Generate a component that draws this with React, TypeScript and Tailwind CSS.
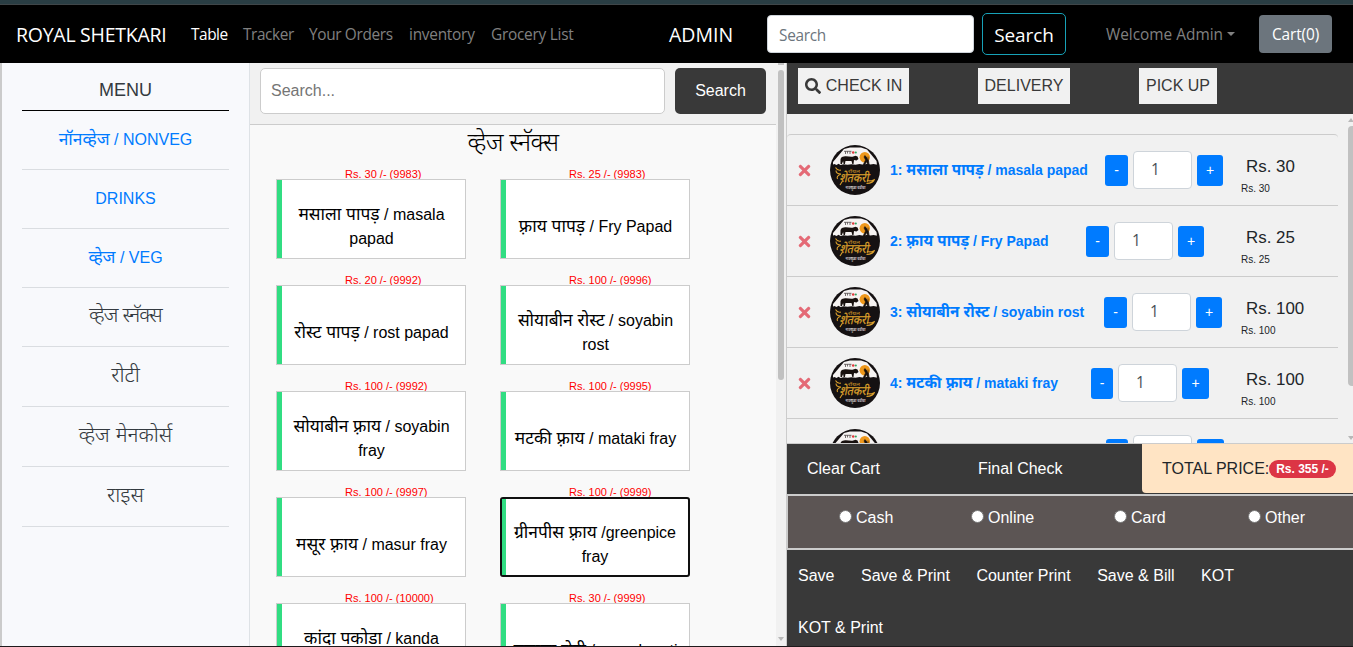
import React from "react";
import { FaSearch, FaTimes } from "react-icons/fa";

const menu = [
  { text: "नॉनव्हेज / NONVEG", link: true, h: "h-[59px]" },
  { text: "DRINKS", link: true, h: "h-[59px]" },
  { text: "व्हेज / VEG", link: true, h: "h-[59px]" },
  { text: "व्हेज स्नॅक्स", link: false, h: "h-[59px] tracking-[-0.9px]" },
  { text: "रोटी", link: false, h: "h-[60px]" },
  { text: "व्हेज मेनकोर्स", link: false, h: "h-[60px]" },
  { text: "राइस", link: false, h: "h-[60px]" },
];

const dishes = [
  { price: "Rs. 30 /- (9983)", lines: ["मसाला पापड़ / masala", "papad"] },
  { price: "Rs. 25 /- (9983)", lines: ["फ़्राय पापड़ / Fry Papad"] },
  { price: "Rs. 20 /- (9992)", lines: ["रोस्ट पापड़ / rost papad"] },
  { price: "Rs. 100 /- (9996)", lines: ["सोयाबीन रोस्ट / soyabin", "rost"] },
  { price: "Rs. 100 /- (9992)", lines: ["सोयाबीन फ़्राय / soyabin", "fray"] },
  { price: "Rs. 100 /- (9995)", lines: ["मटकी फ़्राय / mataki fray"] },
  { price: "Rs. 100 /- (9997)", lines: ["मसूर फ़्राय / masur fray"] },
  { price: "Rs. 100 /- (9999)", lines: ["ग्रीनपीस फ़्राय /greenpice", "fray"], focus: true },
  { price: "Rs. 100 /- (10000)", lines: ["कांदा पकोडा / kanda", "pakoda"] },
  { price: "Rs. 30 /- (9999)", lines: ["मसाला रोटी / masala roti"] },
];

const cart = [
  { name: "1: मसाला पापड़ / masala papad", price: "Rs. 30", w: "w-[215px]", m: "w-[23px]", p: "w-[26px]" },
  { name: "2: फ़्राय पापड़ / Fry Papad", price: "Rs. 25", w: "w-[196px]", m: "w-[23px]", p: "w-[26px]" },
  { name: "3: सोयाबीन रोस्ट / soyabin rost", price: "Rs. 100", w: "w-[214px]", m: "w-[23px]", p: "w-[26px]" },
  { name: "4: मटकी फ़्राय / mataki fray", price: "Rs. 100", w: "w-[201px]", m: "w-[22px]", p: "w-[27px]" },
  { name: "5: मसूर फ़्राय / masur fray", price: "Rs. 100", w: "w-[216px]", m: "w-[22px]", p: "w-[27px]" },
];

/* Sets Devanagari runs slightly larger than the Latin text beside them. */
function Mixed({ text }: { text: string }) {
  return (
    <>
      {text.split(/([\u0900-\u097F]+(?:\s[\u0900-\u097F]+)*)/).map((run, i) =>
        i % 2 ? (
          <span key={i} className="text-[1.085em] leading-none">{run}</span>
        ) : (
          run
        ),
      )}
    </>
  );
}

function Logo() {
  return (
    <svg viewBox="0 0 50 50" className="ml-[19px] size-[50px] shrink-0">
      <circle cx="25" cy="25" r="25" fill="#151112" />
      <path d="M3 20.500V17L14 4L20 2.500H31L37 4.500L46.500 16L47 20.500Z" fill="#f6f3f2" />
      <path d="M14 6.300h7.500M15.500 6v3M17.500 6v2.500M20 6v3" stroke="#66605f" strokeWidth=".9" />
      <circle cx="23.200" cy="7.500" r="1.300" fill="#e0393c" />
      <circle cx="25.800" cy="7.500" r="1.100" fill="#2da861" />
      <circle cx="34.800" cy="12.300" r="5.200" fill="#ef981b" />
      <path d="M10.500 19v-4.500c.3-2 1.500-2.800 3.500-3 3-.6 6 .5 8.500.2l3-1 2 .8 1 2.500-2 1.500-2.500-.5-.5 4h-1.200l-.8-3h-6l-.6 3h-1.300l-.5-3-1.200 3z" fill="#17100e" />
      <path d="M33 20l2.500-5-1.500-3 .8-1.500 1.700 1.500 2 4 .5 4h-1.200l-1.300-3.500-1.500 3.500zM38 11.500l1 8" fill="#17100e" stroke="#17100e" strokeWidth=".5" />
      <path d="M2.500 19.800l2-.8 2 1 2-1.200 2 1.200 3-.8 4 .5 4-.5 4 .5 4-.8 4 .8 4-1 3 .8 3-.6 4 .8V23h-45z" fill="#151112" />
      <text x="18" y="27.500" fontSize="5" fill="#dba02c" fontFamily="Noto Sans Devanagari, Noto Sans, sans-serif" textLength="12" lengthAdjust="spacingAndGlyphs">रॉयल</text>
      <text x="9.500" y="37" fontSize="12.500" fontStyle="italic" fill="#dba02c" stroke="#dba02c" strokeWidth=".25" fontFamily="Noto Sans Devanagari, Noto Sans, sans-serif" textLength="29" lengthAdjust="spacingAndGlyphs">शेतकरी</text>
      <path d="M5.500 22.500q2 3.500 5.500 2.500M6 25.500q0 3.500 5 3.500-5 2-3.500 5M12.500 36l-2.500 4M36.500 38.500q7-.5 8-4.500M37 35.500q3.500 1 6.500-.5" stroke="#dba02c" strokeWidth="1.100" fill="none" />
      <text x="15.500" y="44" fontSize="4.200" fontWeight="bold" fill="#c9c5c3" fontFamily="Noto Sans Devanagari, Noto Sans, sans-serif" textLength="20" lengthAdjust="spacingAndGlyphs">नादखुळा चवीचा</text>
    </svg>
  );
}

function Navbar() {
  return (
    <nav className="flex h-[58px] shrink-0 items-center bg-black font-['Open_Sans','Noto_Sans',sans-serif] text-[15.4px] whitespace-nowrap text-[#808080]">
      <span className="ml-4 w-[175px] pt-px text-[19.500px] tracking-[-0.26px] text-white">ROYAL SHETKARI</span>
      <span className="w-[52px] pt-[2px] tracking-[-0.45px] text-white">Table</span>
      <span className="w-[66px] pt-[2px] tracking-[-0.4px]">Tracker</span>
      <span className="w-[100px] pt-[2px] tracking-[-0.35px]">Your Orders</span>
      <span className="w-[82px] pt-[2px] tracking-[-0.25px]">inventory</span>
      <span className="w-[178px] pt-[2px] tracking-[-0.25px]">Grocery List</span>
      <span className="w-[98px] pt-px text-[19.500px] text-white">ADMIN</span>
      <input className="h-[38px] w-[207px] rounded border border-[#ced4da] bg-white px-[11px] pt-[2px] text-[15.4px] tracking-[-0.3px] placeholder:text-[#6c757d]" placeholder="Search" />
      <button className="ml-2 h-[42px] w-[84px] rounded-[5px] border border-[#17a2b8] pt-[2px] text-[19px] tracking-[-0.1px] text-white">Search</button>
      <span className="ml-10 w-[121px] pt-[2px]">Welcome Admin</span>
      <span className="h-0 w-0 border-x-[4px] border-t-[4px] border-x-transparent border-t-[#808080]" />
      <button className="ml-auto mr-[21px] h-[38px] w-[73px] rounded bg-[#6c757d] pt-[2px] text-[15.4px] tracking-[-0.1px] text-white">Cart(0)</button>
    </nav>
  );
}

function Sidebar() {
  return (
    <aside className="w-[250px] shrink-0 border-r border-l-2 border-r-[#dee2e6] border-l-[#cbcbcb] bg-[#f8f9fc] pr-5 pl-5 text-center text-[#343a40]">
      <div className="flex h-12 items-center justify-center border-b border-black pt-2 text-[18px]">MENU</div>
      {menu.map((m) => (
        <div key={m.text} className={`border-b border-[#dadde1] ${m.h} ${m.link ? "pt-[17px] text-[16px] leading-6 text-[#007bff]" : "flex items-center justify-center pb-1 text-[21px] font-light"}`}>
          {m.link ? <Mixed text={m.text} /> : m.text}
        </div>
      ))}
    </aside>
  );
}

function Dishes() {
  return (
    <main className="flex w-[536px] shrink-0 bg-[#f9f9f9]">
      <div className="flex w-[526px] flex-col">
        <div className="flex h-[62px] shrink-0 gap-[10px] border-b border-[#ccc] bg-[#f1f1f1] px-[10px] pt-[5px]">
          <input className="h-[46px] w-[405px] rounded-[5px] border border-[#ccc] bg-white px-[10px] text-[16px] placeholder:text-[#757575]" placeholder="Search..." />
          <button className="h-[46px] w-[91px] rounded-[5px] bg-[#393939] text-[16px] text-white">Search</button>
        </div>
        <h2 className="h-[41px] shrink-0 text-center text-[25px] leading-[34px] font-light tracking-[-0.5px] text-black">व्हेज स्नॅक्स</h2>
        <div className="grid grid-cols-[190px_190px] content-start gap-x-[34px] overflow-hidden pl-[26px]">
          {dishes.map((d, i) => (
            <div key={i} className="h-[106px]">
              <div className="h-[13px] overflow-hidden pl-[69px] text-[11px] leading-[16px] whitespace-nowrap text-[#ff0000]">{d.price}</div>
              <button className={`flex h-[80px] w-[190px] bg-white text-[16px] leading-6 text-black ${d.focus ? "rounded-[3px] border-2 border-[#101010]" : "border border-[#ccc]"}`}>
                <span className={`h-full shrink-0 bg-[#31dd82] ${d.focus ? "w-[4px]" : "w-[5px]"}`} />
                <span className={`flex-1 pr-[4px] whitespace-nowrap ${d.lines.length > 1 ? (d.focus ? "pt-[22px]" : "pt-[23px]") : "pt-[35px]"}`}>
                  {d.lines.map((l) => (
                    <span key={l} className="block h-6"><Mixed text={l} /></span>
                  ))}
                </span>
              </button>
            </div>
          ))}
        </div>
      </div>
      <div className="flex flex-1 flex-col items-center justify-between bg-[#f1f1f1] pr-px">
        <span className="h-[2px] w-[6px] bg-[#c1c1c1]" />
        <span className="mt-[5px] mb-auto h-[310px] w-[6px] rounded-full bg-[#c1c1c1]" />
        <span className="mb-[5px] h-0 w-0 border-x-[3px] border-t-[4px] border-x-transparent border-t-[#b8b8b8]" />
      </div>
    </main>
  );
}

function CartPanel() {
  return (
    <section className="flex flex-1 flex-col overflow-hidden border-l border-[#ccc] bg-[#f1f1f1] whitespace-nowrap">
      <div className="flex h-[51px] shrink-0 bg-[#393939] pt-[5px] pl-[11px] text-[16px] text-[#393939]">
        <button className="flex h-9 w-[111px] items-center justify-center gap-[5px] bg-[#f1f1f1]"><FaSearch className="size-4" />CHECK IN</button>
        <button className="ml-[69px] h-9 w-[92px] bg-[#f1f1f1]">DELIVERY</button>
        <button className="ml-[69px] h-9 w-[78px] bg-[#f1f1f1]">PICK UP</button>
      </div>
      <div className="flex h-[330px] shrink-0 overflow-hidden border-b border-[#ccc]">
        <div className="mt-5 h-[400px] w-[551px] rounded-t-[4px] border-t border-[#ccc]">
          {cart.map((c) => (
            <div key={c.name} className="flex h-[71px] items-center border-b border-[#ccc] pl-[11px]">
              <FaTimes className="h-[17px] w-[13px] text-[#e46a76]" />
              <Logo />
              <div className="ml-[10px] flex w-[351px] items-center">
                <span className={`${c.w} shrink-0 text-[14px] leading-5 font-bold text-[#007bff]`}><Mixed text={c.name} /></span>
                <button className={`h-[31px] ${c.m} rounded-[3px] bg-[#007bff] text-[14px] text-white`}>-</button>
                <span className="mx-[5px] flex h-[38px] w-[59px] items-center rounded border border-[#ced4da] bg-white pl-[17px] font-['Open_Sans','Noto_Sans',sans-serif] text-[15.4px] text-[#495057]">1</span>
                <button className={`h-[31px] ${c.p} rounded-[3px] bg-[#007bff] text-[14px] text-white`}>+</button>
              </div>
              <div className="pt-[12px] text-[#212529]">
                <div className="pl-[5px] text-[16.900px] leading-6">{c.price}</div>
                <div className="text-[10px] leading-[19px]">{c.price}</div>
              </div>
            </div>
          ))}
        </div>
        <div className="ml-auto flex w-[5px] flex-col">
          <span className="mt-[4px] h-0 w-0 border-x-[3px] border-b-[4px] border-x-transparent border-b-[#b8b8b8]" />
          <span className="mt-[4px] h-[260px] w-[8px] rounded-full bg-[#c1c1c1]" />
          <span className="mt-auto mb-[3px] h-0 w-0 border-x-[3px] border-t-[4px] border-x-transparent border-t-[#b8b8b8]" />
        </div>
      </div>
      <div className="flex h-[50px] shrink-0 items-center bg-[#393939] text-[16px] text-white">
        <span className="ml-5 w-[171px]">Clear Cart</span>
        <span className="w-[164px]">Final Check</span>
        <div className="flex h-[49px] flex-1 items-center self-start rounded-bl-[4px] bg-[#ffe4c4] pl-5 text-[#212529]">
          <span className="w-[107px] shrink-0">TOTAL PRICE:</span>
          <span className="h-[18px] w-[67px] shrink-0 rounded-full bg-[#dc3545] text-center text-[12px] leading-[18px] font-bold text-white">Rs. 355 /-</span>
        </div>
      </div>
      <div className="flex h-14 shrink-0 border-y-2 border-l border-[#ccc] bg-[#5c5554] pt-[10px] text-[16px] leading-6 text-white">
        {[
          { t: "Cash", c: "ml-[51px] w-[132px]" },
          { t: "Online", c: "w-[143px]" },
          { t: "Card", c: "w-[134px]" },
          { t: "Other", c: "" },
        ].map((o) => (
          <label key={o.t} className={`flex ${o.c}`}>
            <span className="mt-[4px] mr-[4px] size-[13px] rounded-full border border-[#767676] bg-white" />
            {o.t}
          </label>
        ))}
      </div>
      <div className="flex flex-1 flex-wrap content-start gap-x-[26.500px] gap-y-7 bg-[#393939] pt-[14px] pr-20 pl-[11px] text-[16px] leading-6 text-white">
        {["Save", "Save & Print", "Counter Print", "Save & Bill", "KOT", "KOT & Print"].map((t) => (
          <span key={t}>{t}</span>
        ))}
      </div>
    </section>
  );
}

export default function App() {
  return (
    <div className="flex h-[647px] w-[1353px] flex-col overflow-hidden font-['Liberation_Sans','Noto_Sans_Devanagari','Noto_Sans',sans-serif]">
      <div className="h-[5px] shrink-0 border-b border-[#3f4649] bg-[#293d43]" />
      <Navbar />
      <div className="flex h-[583px] shrink-0 overflow-hidden">
        <Sidebar />
        <Dishes />
        <CartPanel />
      </div>
      <div className="h-px bg-[#1f1a1c]" />
    </div>
  );
}
